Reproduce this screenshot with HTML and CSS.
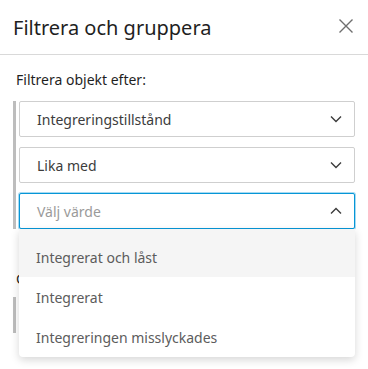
FILE: index.html
```html
<!DOCTYPE html>
<html>
  <head>
    <title>Filtrera och gruppera</title>
    <link rel="stylesheet" href="styles.css">
  </head>
  <body>
    <div class="panel">
      <div class="panel__header">
        <h1 class="panel__title">Filtrera och gruppera</h1>
        <button class="close" aria-label="Stäng">
          <svg width="16" height="16" viewBox="0 0 16 16"><path d="M1.5 1.5l13 13M14.5 1.5l-13 13" stroke="#6f6f6f" stroke-width="1.4" fill="none"/></svg>
        </button>
      </div>

      <div class="panel__body">
        <p class="label">Filtrera objekt efter:</p>
        <div class="group">
          <div class="select">
            <span>Integreringstillstånd</span>
            <svg class="chev" width="12" height="8" viewBox="0 0 12 8"><path d="M1 1.5l5 5 5-5" stroke="#3c3c3c" stroke-width="1.4" fill="none"/></svg>
          </div>
          <div class="select">
            <span>Lika med</span>
            <svg class="chev" width="12" height="8" viewBox="0 0 12 8"><path d="M1 1.5l5 5 5-5" stroke="#3c3c3c" stroke-width="1.4" fill="none"/></svg>
          </div>
          <div class="combo">
            <div class="select select--open">
              <span class="placeholder">Välj värde</span>
              <svg class="chev" width="12" height="8" viewBox="0 0 12 8"><path d="M1 6.5l5-5 5 5" stroke="#3c3c3c" stroke-width="1.4" fill="none"/></svg>
            </div>
            <ul class="menu">
              <li class="menu__item menu__item--hover">Integrerat och låst</li>
              <li class="menu__item">Integrerat</li>
              <li class="menu__item">Integreringen misslyckades</li>
            </ul>
          </div>
        </div>

        <p class="label label--group">Gruppera efter:</p>
        <div class="group group--short"></div>
      </div>
    </div>
  </body>
</html>
```

FILE: styles.css
```css
* {
  margin: 0;
  padding: 0;
  box-sizing: border-box;
}

body {
  background: #fff;
  font-family: "Noto Sans", "Open Sans", sans-serif;
  color: #3c3c3c;
}

.panel {
  width: 368px;
  height: 369px;
  overflow: hidden;
}

.panel__header {
  display: flex;
  align-items: center;
  justify-content: space-between;
  height: 55px;
  padding: 0 13px 0 13px;
  border-bottom: 1px solid #d9d9d9;
}

.panel__title {
  font-weight: normal;
  font-size: 20px;
  color: #1f1f1f;
}

.close {
  display: flex;
  border: none;
  background: none;
  margin-right: 1px;
  margin-bottom: 2px;
}

.panel__body {
  padding: 15px 13px 0 13px;
}

.label {
  font-size: 14px;
  color: #1f1f1f;
  padding-left: 3px;
  height: 20px;
  line-height: 20px;
  margin-bottom: 11px;
}

.group {
  display: flex;
  flex-direction: column;
  gap: 10px;
  border-left: 3px solid #bdbdbd;
  padding-left: 3px;
}

.select {
  display: flex;
  align-items: center;
  justify-content: space-between;
  height: 36px;
  padding: 0 12px 0 17px;
  border: 1px solid #cfcfcf;
  border-radius: 2px;
  font-size: 14px;
  color: #3c3c3c;
  background: #fff;
}

.select--open {
  border-color: #0696d7;
  box-shadow: 0 0 0 1px #a8daf1;
}

.placeholder {
  color: #9a9a9a;
}

.combo {
  position: relative;
}

.menu {
  position: absolute;
  top: 36px;
  left: 0;
  right: 0;
  list-style: none;
  background: #fff;
  border-radius: 0 0 4px 4px;
  box-shadow: 0 3px 8px rgba(0, 0, 0, 0.16);
  z-index: 2;
}

.menu__item {
  height: 40px;
  line-height: 42px;
  padding-left: 17px;
  font-size: 14px;
  color: #5c5c5c;
}

.menu__item--hover {
  height: 48px;
  padding-top: 8px;
  background: #f5f5f5;
}

.label--group {
  margin-top: 40px;
  margin-bottom: 8px;
}

.group--short {
  height: 36px;
}
```
